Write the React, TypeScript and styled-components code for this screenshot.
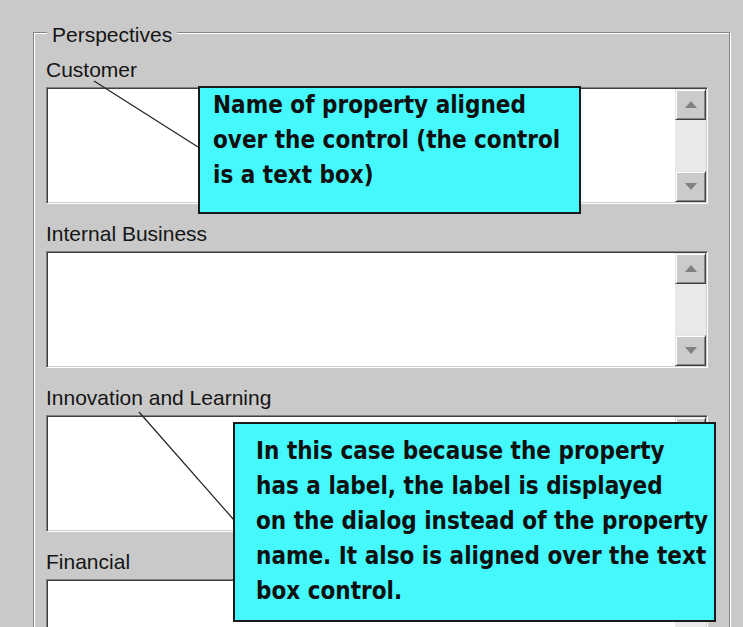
import React from 'react';
import styled, { createGlobalStyle } from 'styled-components';

const GlobalStyle = createGlobalStyle`
  body {
    margin: 0;
    background: #c9c9c9;
  }
`;

const Dialog = styled.div`
  position: relative;
  width: 743px;
  height: 627px;
  overflow: hidden;
  background: #c9c9c9;
  font-family: 'Liberation Sans', Arial, sans-serif;
  color: #151515;
`;

const GroupBox = styled.div`
  box-sizing: border-box;
  margin: 32px 0 0 33px;
  width: 697px;
  height: 640px;
  padding: 0 21px 0 12px;
  border: 1px solid #858585;
  box-shadow: inset 1px 1px 0 #ffffff, 1px 1px 0 #ffffff;
`;

const Legend = styled.div`
  width: fit-content;
  margin: -10px 0 0 1px;
  padding: 0 5px;
  background: #c9c9c9;
  font-size: 21px;
  line-height: 24px;
`;

const FieldList = styled.div`
  display: flex;
  flex-direction: column;
  gap: 18px;
  margin-top: 11px;
`;

const Field = styled.div`
  display: flex;
  flex-direction: column;
  gap: 5px;
`;

const Label = styled.label`
  font-size: 21px;
  line-height: 24px;
  white-space: nowrap;
`;

const TextBox = styled.div`
  box-sizing: border-box;
  display: flex;
  height: 117px;
  padding: 1px;
  background: #ffffff;
  border: 1px solid;
  border-color: #808080 #ffffff #ffffff #808080;
  box-shadow: inset 1px 1px 0 #404040, inset -1px -1px 0 #d4d0c8;
`;

const TextArea = styled.div`
  flex: 1;
  background: #ffffff;
`;

const ScrollBar = styled.div`
  display: flex;
  flex-direction: column;
  width: 31px;
`;

const Track = styled.div`
  flex: 1;
  background: #ebe8eb;
`;

const ArrowButton = styled.div`
  box-sizing: border-box;
  display: flex;
  align-items: center;
  justify-content: center;
  height: 31px;
  background: #cbcbcb;
  border: 1px solid;
  border-color: #e4e4e4 #404040 #404040 #e4e4e4;
  box-shadow: inset 1px 1px 0 #ffffff, inset -1px -1px 0 #858585;
`;

const Overlay = styled.svg`
  position: absolute;
  left: 0;
  top: 0;
  pointer-events: none;
`;

const Callout = styled.div<{ $top: number; $left: number; $width: number; $height: number; $padLeft: number; $padTop: number }>`
  position: absolute;
  box-sizing: border-box;
  top: ${(p) => p.$top}px;
  left: ${(p) => p.$left}px;
  width: ${(p) => p.$width}px;
  height: ${(p) => p.$height}px;
  padding: ${(p) => p.$padTop}px 0 0 ${(p) => p.$padLeft}px;
  background: #44f8fc;
  border: 2px solid #1a1a1a;
  font-family: 'DejaVu Sans Condensed', 'DejaVu Sans', sans-serif;
  font-weight: bold;
  font-size: 24px;
  line-height: 35px;
  color: #101010;
`;

const CalloutLine = styled.div`
  white-space: nowrap;
`;

const Arrow = ({ down }: { down?: boolean }) => (
  <svg width="12" height="7" viewBox="0 0 12 7">
    <polygon points={down ? '0,0 12,0 6,7' : '0,7 12,7 6,0'} fill="#808080" />
  </svg>
);

const fields = ['Customer', 'Internal Business', 'Innovation and Learning', 'Financial'];

const App: React.FunctionComponent = () => {
  const renderedFields = fields.map((name) => (
    <Field key={name}>
      <Label>{name}</Label>
      <TextBox>
        <TextArea />
        <ScrollBar>
          <ArrowButton>
            <Arrow />
          </ArrowButton>
          <Track />
          <ArrowButton>
            <Arrow down />
          </ArrowButton>
        </ScrollBar>
      </TextBox>
    </Field>
  ));

  return (
    <Dialog>
      <GlobalStyle />
      <GroupBox>
        <Legend>Perspectives</Legend>
        <FieldList>{renderedFields}</FieldList>
      </GroupBox>

      <Overlay width="743" height="627">
        <line x1="94" y1="81" x2="198" y2="147" stroke="#222" strokeWidth="1.2" />
        <line x1="139" y1="412" x2="234" y2="520" stroke="#222" strokeWidth="1.2" />
      </Overlay>

      <Callout $top={86} $left={198} $width={383} $height={128} $padLeft={13} $padTop={0}>
        <CalloutLine>Name of property aligned</CalloutLine>
        <CalloutLine>over the control (the control</CalloutLine>
        <CalloutLine>is a text box)</CalloutLine>
      </Callout>

      <Callout $top={422} $left={233} $width={483} $height={200} $padLeft={21} $padTop={10}>
        <CalloutLine>In this case because the property</CalloutLine>
        <CalloutLine>has a label, the label is displayed</CalloutLine>
        <CalloutLine>on the dialog instead of the property</CalloutLine>
        <CalloutLine>name. It also is aligned over the text</CalloutLine>
        <CalloutLine>box control.</CalloutLine>
      </Callout>
    </Dialog>
  );
};

export default App;
